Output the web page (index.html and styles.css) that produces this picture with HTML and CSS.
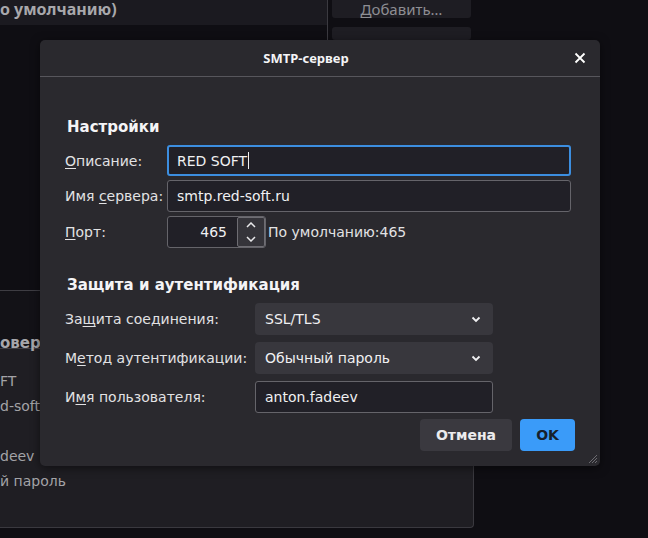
FILE: index.html
```html
<!DOCTYPE html>
<html lang="ru">
<head>
<meta charset="utf-8">
<title>SMTP-сервер</title>
<link rel="stylesheet" href="styles.css">
</head>
<body>
<div class="bg">
  <div class="top">
    <div class="top-left">
      <div class="top-bar">о умолчанию)</div>
    </div>
    <div class="divider"></div>
    <div class="side-buttons">
      <div class="side-btn"><u>Д</u>обавить…</div>
      <div class="side-btn"></div>
    </div>
  </div>
  <div class="panel">
    <div class="panel-head">овера</div>
    <div class="panel-body">
      <div class="pline">FT</div>
      <div class="pline">d-soft.ru</div>
      <div class="pline"></div>
      <div class="pline">deev</div>
      <div class="pline">й пароль</div>
    </div>
  </div>
</div>

<div class="dialog">
  <div class="dlg-header">
    <div class="dlg-title">SMTP-сервер</div>
    <svg class="dlg-close" width="12" height="12" viewBox="0 0 12 12"><path d="M1.5 1.5 L10.5 10.5 M10.5 1.5 L1.5 10.5" stroke="#fff" stroke-width="1.8" fill="none"/></svg>
  </div>
  <div class="dlg-body">
    <h2 class="sec-title">Настройки</h2>
    <div class="grid grid-1">
      <label class="lbl"><u>О</u>писание:</label>
      <div class="input focus">RED SOFT<span class="caret"></span></div>
      <label class="lbl">Имя <u>с</u>ервера:</label>
      <div class="input">smtp.red-soft.ru</div>
      <label class="lbl"><u>П</u>орт:</label>
      <div class="port-row">
        <div class="spin">
          <span class="spin-val">465</span>
          <div class="spin-btns">
            <div class="spin-btn"><svg width="10" height="6" viewBox="0 0 10 6"><path d="M1 5 L5 1 L9 5" stroke="#e8e8ea" stroke-width="1.5" fill="none"/></svg></div>
            <div class="spin-btn"><svg width="10" height="6" viewBox="0 0 10 6"><path d="M1 1 L5 5 L9 1" stroke="#e8e8ea" stroke-width="1.5" fill="none"/></svg></div>
          </div>
        </div>
        <span class="default">По умолчанию:465</span>
      </div>
    </div>

    <h2 class="sec-title sec-2">Защита и аутентификация</h2>
    <div class="grid grid-2">
      <label class="lbl">За<u>щ</u>ита соединения:</label>
      <div class="select">SSL/TLS<svg class="chev" width="10" height="7" viewBox="0 0 10 7"><path d="M1.5 1.5 L5 5 L8.5 1.5" stroke="#f0f0f2" stroke-width="1.8" fill="none"/></svg></div>
      <label class="lbl">М<u>е</u>тод аутентификации:</label>
      <div class="select">Обычный пароль<svg class="chev" width="10" height="7" viewBox="0 0 10 7"><path d="M1.5 1.5 L5 5 L8.5 1.5" stroke="#f0f0f2" stroke-width="1.8" fill="none"/></svg></div>
      <label class="lbl">И<u>м</u>я пользователя:</label>
      <div class="input">anton.fadeev</div>
    </div>

    <div class="actions">
      <button class="btn btn-cancel">Отмена</button>
      <button class="btn btn-ok">OK</button>
    </div>
  </div>
  <svg class="grip" width="10" height="10" viewBox="0 0 10 10"><path d="M9 1 L1 9 M9 4 L4 9 M9 7 L7 9" stroke="#6c6b71" stroke-width="1" fill="none"/></svg>
</div>
</body>
</html>
```

FILE: styles.css
```css
* { box-sizing: border-box; }
html, body { margin: 0; padding: 0; }
body {
  width: 648px;
  height: 538px;
  overflow: hidden;
  background: #0f0e13;
  font-family: "DejaVu Sans", "Noto Sans", sans-serif;
  color: #e6e6e8;
  position: relative;
}
u { text-decoration-thickness: 1px; text-underline-offset: 2px; }

/* background window */
.bg { display: flex; flex-direction: column; }
.top { display: flex; height: 40px; overflow: hidden; }
.top-left { width: 327px; }
.top-bar {
  height: 25px;
  background: #1b1a20;
  font-family: "Noto Sans", sans-serif;
  font-weight: 700;
  font-size: 16px;
  line-height: 17px;
  padding-top: 1px;
  color: #a8a8ac;
  white-space: nowrap;
}
.divider { width: 1px; background: #3b3a40; }
.side-buttons { margin-left: 4px; display: flex; flex-direction: column; gap: 9px; }
.side-btn {
  width: 139px;
  height: 23px;
  background: #1e1d23;
  border-radius: 3px;
  font-family: "Noto Sans", sans-serif;
  font-size: 15px;
  color: #8e8e93;
  text-align: center;
  line-height: 17px;
  padding-top: 1px;
  white-space: nowrap;
}
.side-btn:first-child { border-radius: 0 0 3px 3px; }
.side-btn:last-child { height: 40px; }

.panel {
  margin-top: 250px;
  width: 474px;
  height: 238px;
  border-top: 1px solid #3e3d43;
  border-right: 1px solid #3a393f;
  border-bottom: 1px solid #3a393f;
  border-radius: 0 0 4px 0;
  background: #1f1e23;
}
.panel-head {
  height: 58px;
  background: #131217;
  border-bottom: 1px solid #3e3d43;
  font-weight: 700;
  font-size: 15px;
  color: #a6a6aa;
  padding-top: 45px;
  line-height: 1;
  white-space: nowrap;
}
.panel-body { padding-top: 24px; }
.pline { height: 25px; font-size: 14px; color: #a3a3a7; line-height: 16px; white-space: nowrap; }

/* dialog */
.dialog {
  position: absolute;
  left: 40px;
  top: 40px;
  width: 560px;
  height: 426px;
  background: #2a292e;
  border-radius: 5px;
  box-shadow: 0 2px 10px rgba(0,0,0,0.5);
}
.dlg-header {
  height: 37px;
  border-bottom: 1px solid #57565c;
  display: flex;
  align-items: center;
  justify-content: center;
  padding-right: 28px;
  position: relative;
}
.dlg-title {
  font-family: "Noto Sans", sans-serif;
  font-weight: 700;
  font-size: 13px;
  color: #f4f4f6;
}
.dlg-close { position: absolute; right: 14px; top: 12px; }

.dlg-body { padding: 41px 25px 0 25px; }
.sec-title {
  margin: 0 0 9px 2px;
  font-size: 15px;
  font-weight: 700;
  line-height: 18px;
  color: #f4f4f6;
}
.sec-2 { margin-top: 28px; margin-bottom: 9px; }

.grid { display: grid; align-items: center; }
.grid-1 { grid-template-columns: 102px 404px; row-gap: 4px; }
.grid-2 { grid-template-columns: 190px 238px; row-gap: 7px; }

.lbl { font-size: 14px; color: #e2e2e4; white-space: nowrap; }
.grid-2 .lbl { align-self: start; padding-top: 8px; }

.input {
  height: 32px;
  background: #212027;
  border: 1px solid #65646a;
  border-radius: 3px;
  font-size: 14px;
  color: #f0f0f2;
  padding: 0 9px;
  display: flex;
  align-items: center;
}
.input.focus { border: 2px solid #3c8ee0; padding-left: 8px; height: 31px; }
.caret { display: inline-block; width: 1px; height: 17px; background: #f0f0f2; margin-left: 1px; }

.port-row { display: flex; align-items: center; }
.spin {
  width: 99px;
  height: 32px;
  background: #212027;
  border: 1px solid #65646a;
  border-radius: 3px;
  display: flex;
  align-items: center;
  justify-content: flex-end;
}
.spin-val { font-size: 14px; color: #f0f0f2; margin-right: 10px; }
.spin-btns {
  width: 28px;
  height: 30px;
  display: flex;
  flex-direction: column;
  border: 1px solid #6e6d73;
  background: #35343a;
  border-radius: 2px;
}
.spin-btn { flex: 1; display: flex; align-items: center; justify-content: center; }
.default { font-size: 14px; color: #e2e2e4; margin-left: 2px; }

.select {
  height: 32px;
  background: #38373d;
  border-radius: 4px;
  font-size: 14px;
  color: #f0f0f2;
  padding: 0 10px;
  display: flex;
  align-items: center;
  justify-content: space-between;
}
.chev { margin-right: 2px; }

.actions {
  display: flex;
  justify-content: flex-end;
  gap: 8px;
  margin-top: 6px;
}
.btn {
  height: 32px;
  border: none;
  border-radius: 4px;
  font-family: "DejaVu Sans", sans-serif;
  font-weight: 700;
  font-size: 14px;
}
.btn-cancel { width: 92px; background: #3a393f; color: #ececee; }
.btn-ok { width: 55px; background: #3a9bf9; color: #16202c; }
.grip { position: absolute; right: 2px; bottom: 2px; }
```
